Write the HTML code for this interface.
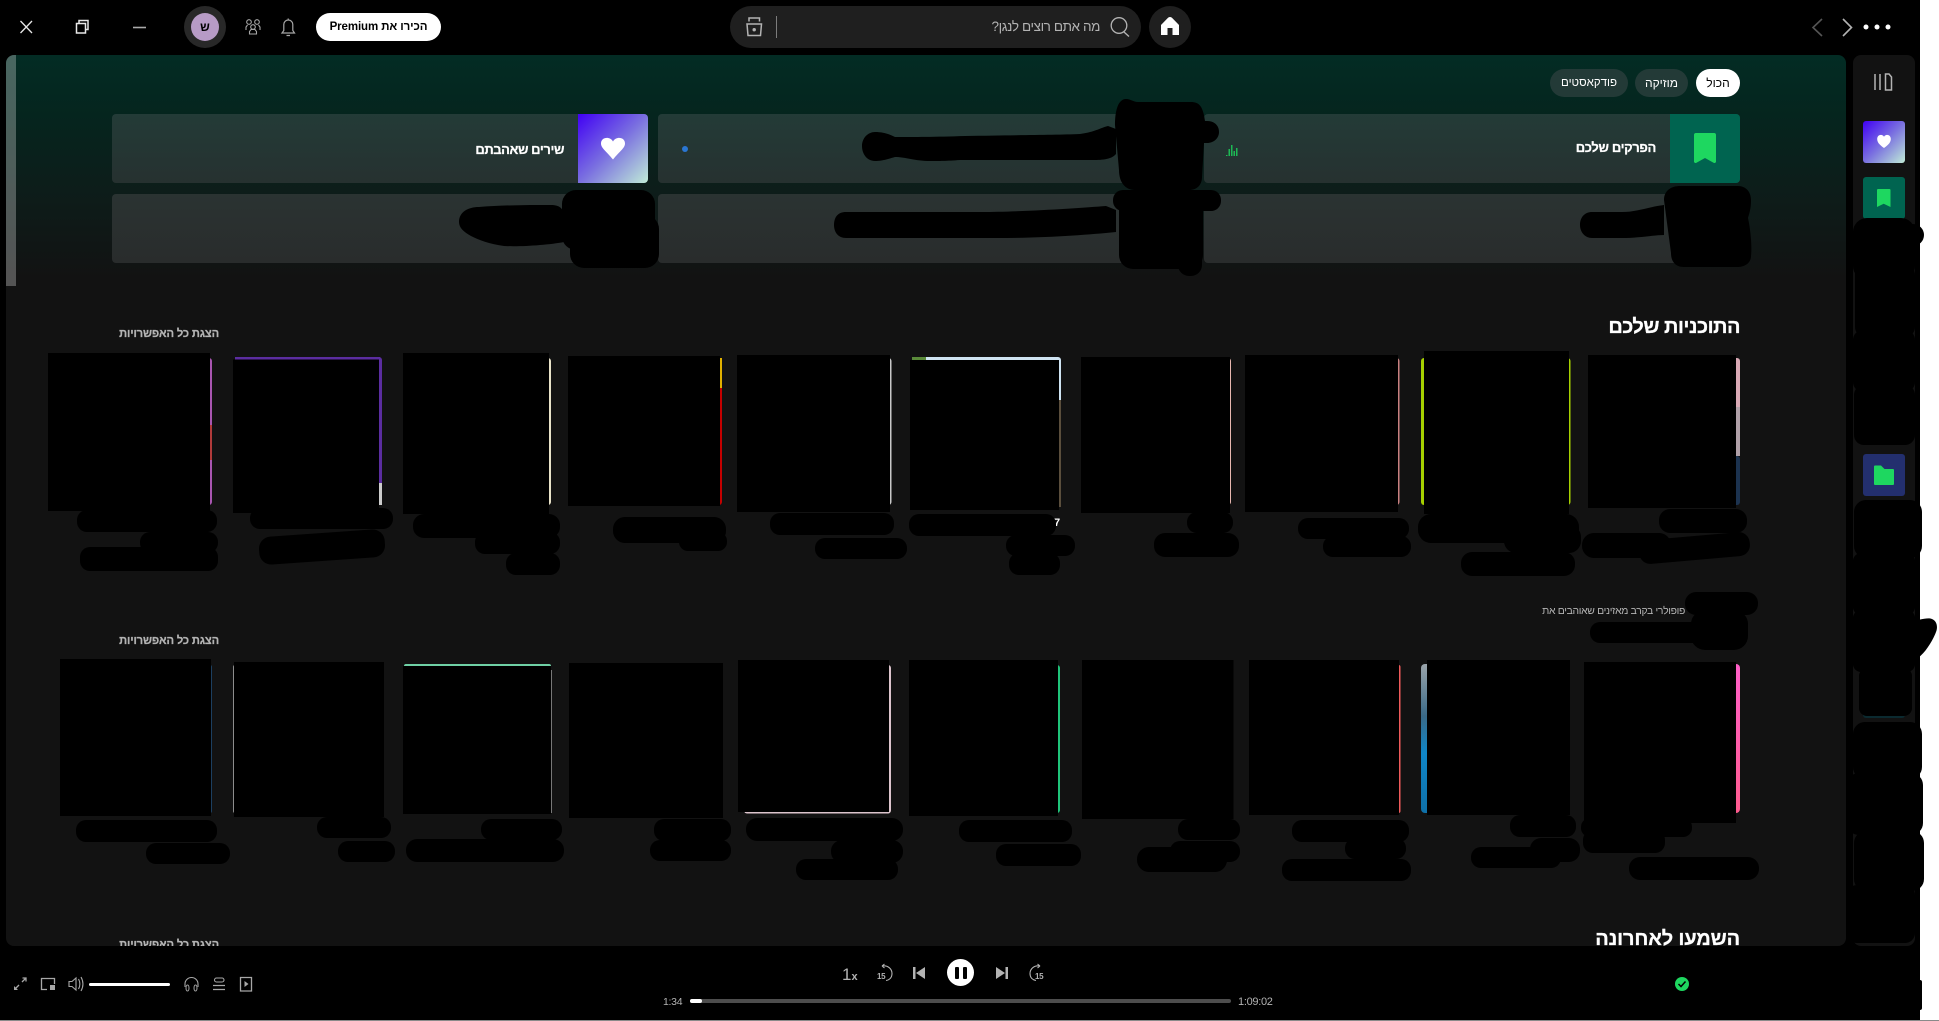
<!DOCTYPE html>
<html lang="he">
<head>
<meta charset="utf-8">
<title>Spotify</title>
<style>
html,body{margin:0;padding:0;width:1939px;height:1021px;overflow:hidden;background:#fff;font-family:"Liberation Sans","Noto Sans CJK JP",sans-serif}
*{box-sizing:border-box}
#app{position:absolute;left:0;top:0;width:1920px;height:1020px;background:#000;overflow:hidden}
#line{position:absolute;left:0;top:1020px;width:1939px;height:1px;background:#8a8a8a}
.a{position:absolute}
.t{position:absolute;white-space:nowrap;direction:rtl;text-align:right;line-height:1}
.b{-webkit-text-stroke:.25px currentColor}
#panel{position:absolute;left:6px;top:55px;width:1840px;height:891px;border-radius:8px;overflow:hidden;background:linear-gradient(#032c24 0,#05251e 60px,#0d1d1a 135px,#121212 225px,#121212 100%)}
#side{position:absolute;left:1853px;top:55px;width:62px;height:891px;border-radius:8px;background:#121212}
.card{position:absolute;width:536px;height:69px;border-radius:4px;overflow:hidden}
.r1{top:59px;background:linear-gradient(#233b37,#263130)}
.r2{top:139px;background:linear-gradient(#2a3332,#292c2c)}
.tile{position:absolute;left:1863px;width:42px;height:42px;border-radius:3px;overflow:hidden}
.chip{position:absolute;top:14px;height:28px;border-radius:14px;background:#233a37;color:#fff;font-size:12px;text-align:center;line-height:28px;direction:rtl}
svg{position:absolute;left:0;top:0;overflow:visible}
</style>
</head>
<body>
<div id="app">
  <div id="panel">
    <div class="a" style="left:0;top:0;width:10px;height:231px;background:rgba(255,255,255,.28)"></div>
    <div class="chip" style="left:1690px;width:44px;background:#fff;color:#000">הכול</div>
    <div class="chip" style="left:1629px;width:53px">מוזיקה</div>
    <div class="chip" style="left:1544px;width:78px;font-size:11.5px">פודקאסטים</div>

    <div class="card r1" style="left:106px">
      <div class="a" style="left:466px;top:0;width:70px;height:69px;background:linear-gradient(135deg,#4000f4,#7a70e0 50%,#c0ecd7)"></div>
      <div class="t b" style="right:84px;top:28.500px;font-size:13px;font-weight:bold;color:#fff;letter-spacing:-.42px">שירים שאהבתם</div>
    </div>
    <div class="card r1" style="left:652px">
      <div class="a" style="left:24px;top:32px;width:6px;height:6px;border-radius:50%;background:#2a76d2"></div>
    </div>
    <div class="card r1" style="left:1198px">
      <div class="a" style="left:466px;top:0;width:70px;height:69px;background:#006450"></div>
      <div class="t b" style="right:84px;top:27px;font-size:13px;font-weight:bold;color:#fff;letter-spacing:-.35px">הפרקים שלכם</div>
    </div>
    <div class="card r2" style="left:106px"></div>
    <div class="card r2" style="left:652px"></div>
    <div class="card r2" style="left:1198px"></div>

    <div class="t b" style="right:106px;top:262px;font-size:20px;font-weight:bold;color:#fff;letter-spacing:-.5px">התוכניות שלכם</div>
    <div class="t b" style="left:113px;width:100px;top:273.500px;font-size:11.2px;font-weight:bold;color:#b3b3b3;letter-spacing:-.15px">הצגת כל האפשרויות</div>

    <div class="t" style="right:161px;top:551.500px;font-size:10.4px;color:#b3b3b3;letter-spacing:-.33px">פופולרי בקרב מאזינים שאוהבים את</div>
    <div class="t b" style="left:113px;width:100px;top:580.500px;font-size:11.2px;font-weight:bold;color:#b3b3b3;letter-spacing:-.15px">הצגת כל האפשרויות</div>

    <div class="t b" style="right:106px;top:874px;font-size:20px;font-weight:bold;color:#fff;letter-spacing:-.15px">השמעו לאחרונה</div>
    <div class="t b" style="left:113px;width:100px;top:885px;font-size:11.2px;font-weight:bold;color:#b3b3b3;letter-spacing:-.15px">הצגת כל האפשרויות</div>
  </div>

  <div id="side"></div>
  <div class="tile" style="top:121px;background:linear-gradient(135deg,#4000f4,#7a70e0 50%,#c0ecd7)"></div>
  <div class="tile" style="top:177px;background:#006450"></div>
  <div class="tile" style="top:454px;background:#232f6e"></div>
  <div class="tile" style="top:676px;background:#0b2a30"></div>

  <!-- top bar -->
  <div class="a" style="left:184px;top:6px;width:42px;height:42px;border-radius:50%;background:#282828"></div>
  <div class="a" style="left:191px;top:13px;width:28px;height:28px;border-radius:50%;background:#b79bc6;color:#000;font-size:12px;font-weight:bold;text-align:center;line-height:28px">ש</div>
  <div class="a" style="left:316px;top:13px;width:125px;height:28px;border-radius:14px;background:#fff;color:#000;font-size:11.5px;font-weight:bold;text-align:center;line-height:28px;direction:rtl;letter-spacing:-.1px">הכירו את Premium</div>
  <div class="a" style="left:730px;top:6px;width:411px;height:42px;border-radius:21px;background:#1f1f1f"></div>
  <div class="a" style="left:776px;top:16px;width:1px;height:22px;background:#7c7c7c"></div>
  <div class="t" style="right:820px;top:20px;font-size:13.500px;color:#b3b3b3;letter-spacing:-.4px">מה אתם רוצים לנגן?</div>
  <div class="a" style="left:1149px;top:6px;width:42px;height:42px;border-radius:50%;background:#1f1f1f"></div>

  <!-- player -->
  <div class="a" style="left:89px;top:983px;width:81px;height:3px;border-radius:2px;background:#fff"></div>
  <div class="t" style="left:663px;top:997px;font-size:10.500px;color:#b3b3b3;direction:ltr;letter-spacing:-.3px">1:34</div>
  <div class="a" style="left:690px;top:999px;width:541px;height:4px;border-radius:2px;background:#4d4d4d"></div>
  <div class="a" style="left:690px;top:999px;width:12px;height:4px;border-radius:2px;background:#fff"></div>
  <div class="t" style="left:1238px;top:997px;font-size:11px;color:#b3b3b3;direction:ltr;letter-spacing:-.3px">1:09:02</div>
  <div class="t" style="left:842px;top:966px;font-size:17px;color:#b3b3b3;direction:ltr">1<span style="font-size:11px;font-weight:bold">x</span></div>
  <div class="a" style="left:947px;top:959px;width:27px;height:27px;border-radius:50%;background:#fff"></div>
  <div class="a" style="left:954.500px;top:966.500px;width:4px;height:12px;background:#000;border-radius:1px"></div>
  <div class="a" style="left:962.500px;top:966.500px;width:4px;height:12px;background:#000;border-radius:1px"></div>
  <div class="t" style="left:877px;top:973px;font-size:8px;font-weight:bold;color:#b3b3b3;direction:ltr;letter-spacing:-.3px">15</div>
  <div class="t" style="left:1035px;top:973px;font-size:8px;font-weight:bold;color:#b3b3b3;direction:ltr;letter-spacing:-.3px">15</div>
  <div class="t" style="left:1054px;top:518px;font-size:11px;font-weight:bold;color:#fff;direction:ltr">7</div>
</div>
<div id="line"></div>

<svg width="1939" height="1021" viewBox="0 0 1939 1021" fill="none">
  <!-- window controls -->
  <g stroke="#e8e8e8" stroke-width="1.300">
    <path d="M20.500 21 32 33M32 21 20.500 33"/>
    <path d="M76.500 23.500h9v9.500h-9zM79 23v-2.500h9v9h-2.500" stroke-width="1.500"/>
    <path d="M133 27.500h13" stroke="#aaa" stroke-width="1.600"/>
  </g>
  <!-- friends -->
  <g stroke="#a7a7a7" stroke-width="1.100">
    <circle cx="249" cy="22" r="2.300"/><circle cx="257" cy="22" r="2.300"/><circle cx="253" cy="27" r="2.300"/>
    <path d="M246 30v-3l1.500-2M260 30v-3l-1.500-2M249.500 34v-2.500l1.500-2h4l1.500 2V34z"/>
  </g>
  <!-- bell -->
  <path d="M282 33h12.500l-1.700-2.500V24.500a4.500 4.500 0 0 0-9 0v6zM286.500 35.500h3.500M288.200 20v-1.500" stroke="#a7a7a7" stroke-width="1.200"/>
  <!-- browse -->
  <g stroke="#b3b3b3" stroke-width="1.500">
    <path d="M747 24h14.500l-1 11.500H748zM749 21.500v-3.500h10.500v3.500"/>
    <circle cx="754.200" cy="29.700" r="1.700" fill="#b3b3b3" stroke="none"/>
  </g>
  <!-- magnifier -->
  <circle cx="1119" cy="25.500" r="7.800" stroke="#b3b3b3" stroke-width="1.300"/>
  <path d="M1124 32l5 4.500" stroke="#b3b3b3" stroke-width="1.400"/>
  <!-- home -->
  <path d="M1170 17c1 0 1.500.4 2.200 1l6.800 7v10h-6.500v-7h-5v7H1161V25l6.800-7c.7-.6 1.200-1 2.200-1z" fill="#fff"/>
  <!-- nav -->
  <path d="M1822 19l-9 8.500 9 8.500" stroke="#555" stroke-width="1.600"/>
  <path d="M1843 19l8.500 8.500-8.500 8.500" stroke="#b3b3b3" stroke-width="1.600"/>
  <circle cx="1866" cy="27" r="2.500" fill="#fff"/><circle cx="1877" cy="27" r="2.500" fill="#fff"/><circle cx="1888" cy="27" r="2.500" fill="#fff"/>
  <!-- card icons -->
  <path d="M613 159.500C606 151 601 148 601 143.500C601 137 610 136 613 141.500C616 136 625 137 625 143.500C625 148 620 151 613 159.500z" fill="#fff"/>
  <path d="M1694 135a2 2 0 0 1 2-2h18a2 2 0 0 1 2 2v27l-1 1h-1l-9-5-9 5h-1l-1-1z" fill="#1ed760"/>
  <path d="M1226 155h1.500v1h-1.500zM1228.500 149h1.500v7h-1.500zM1231 145h1.500v11h-1.500zM1233.500 151h1.500v5h-1.500zM1236 148h1.500v8h-1.500z" fill="#1db954"/>
  <!-- library -->
  <path d="M1875 74v16M1880 74v16M1885.500 74h3.500l2.500 3v13h-6z" stroke="#b3b3b3" stroke-width="1.500"/>
  <!-- side tiles icons -->
  <path d="M1884 148c-5-3.500-6.800-6-6.800-9 0-4.500 5-5.500 6.800-2.300 1.800-3.200 6.800-2.200 6.800 2.300 0 3-1.800 5.500-6.800 9z" fill="#fff"/>
  <path d="M1877 190a1 1 0 0 1 1-1h11.500a1 1 0 0 1 1 1v17l-6.800-3.300-6.700 3.300z" fill="#1ed760"/>
  <path d="M1874 466.500a1 1 0 0 1 1-1h6l3.500 3.500h8.500a1 1 0 0 1 1 1V484a1 1 0 0 1-1 1h-18a1 1 0 0 1-1-1z" fill="#1ed760"/>
  <!-- player left icons -->
  <g stroke="#a7a7a7" stroke-width="1.300">
    <path d="M15 989l4-4M22 982l4-4M22.500 978H26v3.500"/>
    <path d="M14 990v-4l4 4z" fill="#a7a7a7" stroke="none"/>
    <path d="M47 989.500h-5.500v-11h13v5.500"/>
    <path d="M50 985h5v5h-5z" fill="#a7a7a7" stroke="none"/>
    <path d="M69 981.500h3l4-3.500v12l-4-3.500h-3zM78.500 979c1.800 3 1.800 7 0 10M81 977c2.500 4.500 2.500 9.500 0 14" stroke-width="1.100"/>
    <path d="M185 987v-3a6.500 6.500 0 0 1 13 0v3" stroke-width="1.100"/>
    <ellipse cx="187.500" cy="988" rx="1.500" ry="3" stroke-width="1"/>
    <ellipse cx="195.500" cy="988" rx="1.500" ry="3" stroke-width="1"/>
    <rect x="214.500" y="978" width="9.500" height="4" rx="2" stroke-width="1.100"/>
    <path d="M213 985.500h12M213 989.500h12" stroke-width="1.200"/>
    <path d="M240.500 977.500h11v13.500h-11z"/>
    <path d="M244.500 981l4 3-4 3z" fill="#a7a7a7" stroke="none"/>
  </g>
  <!-- transport -->
  <path d="M913 967h2.500v12H913zM925 967v12l-9-6z" fill="#b3b3b3"/>
  <path d="M1008 967h-2.500v12h2.500zM996 967v12l9-6z" fill="#b3b3b3"/>
  <path d="M882 966c6-1 10 3 10 7.500s-3 6.500-6 7M882 966l2.500-2M882 966l2.500 2" stroke="#b3b3b3" stroke-width="1.100"/>
  <path d="M1040 966c-6-1-10 3-10 7.500s3 6.500 6 7M1040 966l-2.500-2M1040 966l-2.500 2" stroke="#b3b3b3" stroke-width="1.100"/>
  <!-- connect check -->
  <circle cx="1682" cy="984" r="7" fill="#1ed760"/>
  <path d="M1678.500 984l2.500 2.500 4.500-5" stroke="#000" stroke-width="1.500"/>

  <!-- strips row 1 -->
  <rect x="200" y="358" width="12" height="147" rx="3" fill="#a855b0"/>
  <rect x="209" y="425" width="3" height="35" fill="#b03a3a"/>
  <rect x="370" y="357" width="12" height="148" rx="3" fill="#5b2da0"/>
  <rect x="379" y="483" width="3" height="22" fill="#ccc"/>
  <rect x="235" y="357" width="145" height="2.500" fill="#5b2da0"/>
  <rect x="540" y="358" width="11" height="147" rx="3" fill="#e8e2c8"/>
  <rect x="710" y="358" width="12" height="147" rx="3" fill="#c40000"/>
  <rect x="720" y="358" width="2" height="30" fill="#e0b000"/>
  <rect x="880" y="358" width="11.500" height="147" rx="3" fill="#c8c8c8"/>
  <rect x="912" y="357" width="149" height="150" rx="3" fill="#cfe4f2"/>
  <rect x="912" y="357" width="14" height="3" fill="#5a8a3a"/>
  <rect x="1059" y="400" width="2" height="107" fill="#5a4e3c"/>
  <rect x="1220" y="358" width="11" height="147" rx="3" fill="#e8b8b0"/>
  <rect x="1390" y="358" width="9.500" height="147" rx="3" fill="#c88080"/>
  <rect x="1421" y="358" width="149.500" height="147" rx="3" fill="#a6d000"/>
  <rect x="1700" y="358" width="40" height="60" rx="3" fill="#d9a9b5"/>
  <rect x="1730" y="407" width="10" height="49" fill="#b0a0a8"/>
  <rect x="1700" y="456" width="40" height="49" rx="3" fill="#1c3350"/>
  <!-- strips row 2 -->
  <rect x="205" y="665" width="7" height="148" rx="2" fill="#1c3f60"/>
  <rect x="233" y="665" width="10" height="148" rx="2" fill="#8c8c8c"/>
  <rect x="404" y="664" width="147" height="20" rx="2" fill="#6fd0a5"/>
  <rect x="551" y="670" width="1" height="143" fill="#777"/>
  <rect x="744" y="665" width="147" height="148.500" rx="3" fill="#dcc4cc"/>
  <rect x="1050" y="665" width="10" height="148" rx="3" fill="#1fc47a"/>
  <rect x="1390" y="665" width="10.500" height="148" rx="2" fill="#f05a5a"/>
  <defs>
    <linearGradient id="bl" x1="0" y1="0" x2="0" y2="1"><stop offset="0" stop-color="#9aa4aa"/><stop offset=".35" stop-color="#3a6a88"/><stop offset=".6" stop-color="#0f86c8"/><stop offset="1" stop-color="#0f70a8"/></linearGradient>
    <linearGradient id="pk" x1="0" y1="0" x2="0" y2="1"><stop offset="0" stop-color="#ff5fc8"/><stop offset="1" stop-color="#ff5b8e"/></linearGradient>
  </defs>
  <rect x="1421" y="664" width="14" height="149" rx="4" fill="url(#bl)"/>
  <rect x="1725" y="664" width="15" height="149" rx="4" fill="url(#pk)"/>

  <g fill="#000">
    <!-- covers row 1 -->
    <rect x="48" y="353" width="162" height="158"/>
    <rect x="233" y="359.500" width="146" height="153.500"/>
    <rect x="403" y="353" width="146" height="161"/>
    <rect x="568" y="356" width="152" height="150"/>
    <rect x="737" y="355" width="153" height="157"/>
    <rect x="910" y="360" width="149" height="150"/>
    <rect x="1081" y="357" width="149" height="156"/>
    <rect x="1245" y="355" width="153" height="157"/>
    <rect x="1424" y="351" width="145" height="163"/>
    <rect x="1588" y="355" width="148" height="153"/>
    <!-- covers row 2 -->
    <rect x="60" y="659" width="151" height="157"/>
    <rect x="234" y="662" width="150" height="155"/>
    <rect x="403" y="666" width="148" height="148"/>
    <rect x="569" y="663" width="154" height="155"/>
    <rect x="738" y="660" width="151" height="152"/>
    <rect x="909" y="660" width="149" height="156"/>
    <rect x="1082" y="660" width="151.500" height="159"/>
    <rect x="1249" y="660" width="150" height="155"/>
    <rect x="1427" y="660" width="143" height="155"/>
    <rect x="1584" y="662" width="152" height="161"/>

    <!-- text scribbles row 1 -->
    <g>
      <rect x="77" y="510" width="140" height="22" rx="10"/><rect x="140" y="532" width="78" height="21" rx="10"/><rect x="80" y="547" width="138" height="24" rx="10"/>
      <rect x="250" y="508" width="143" height="21" rx="10"/><rect x="259" y="533" width="126" height="28" rx="12" transform="rotate(-4 322 547)"/>
      <rect x="413" y="514" width="147" height="24" rx="11"/><rect x="475" y="532" width="85" height="22" rx="10"/><rect x="506" y="553" width="54" height="22" rx="10"/>
      <rect x="613" y="517" width="113" height="26" rx="12"/><rect x="679" y="532" width="48" height="19" rx="9"/>
      <rect x="770" y="513" width="124" height="22" rx="10"/><rect x="815" y="538" width="92" height="21" rx="10"/>
      <rect x="909" y="514" width="147" height="22" rx="10"/><rect x="1006" y="535" width="69" height="21" rx="10"/><rect x="1009" y="553" width="51" height="22" rx="10"/>
      <rect x="1187" y="512" width="46" height="21" rx="10"/><rect x="1154" y="533" width="85" height="24" rx="11"/>
      <rect x="1298" y="518" width="111" height="21" rx="10"/><rect x="1323" y="536" width="88" height="21" rx="10"/>
      <rect x="1418" y="514" width="161" height="29" rx="13"/><rect x="1504" y="525" width="77" height="28" rx="12"/><rect x="1461" y="552" width="114" height="24" rx="11"/>
      <rect x="1659" y="509" width="88" height="24" rx="11"/><rect x="1582" y="533" width="89" height="25" rx="12"/><rect x="1639" y="536" width="111" height="24" rx="11" transform="rotate(-5 1695 548)"/>
    </g>
    <!-- subtitle blobs -->
    <rect x="1685" y="592" width="73" height="23" rx="11"/>
    <rect x="1590" y="622" width="158" height="21" rx="10"/>
    <rect x="1691" y="610" width="57" height="40" rx="14"/>
    <!-- text scribbles row 2 -->
    <g>
      <rect x="76" y="820" width="141" height="22" rx="10"/><rect x="146" y="843" width="84" height="21" rx="10"/>
      <rect x="317" y="817" width="74" height="21" rx="10"/><rect x="338" y="841" width="57" height="21" rx="10"/>
      <rect x="481" y="819" width="81" height="21" rx="10"/><rect x="406" y="839" width="158" height="23" rx="11"/>
      <rect x="654" y="819" width="77" height="22" rx="10"/><rect x="650" y="840" width="81" height="21" rx="10"/>
      <rect x="746" y="818" width="157" height="23" rx="11"/><rect x="831" y="840" width="72" height="23" rx="11"/><rect x="796" y="859" width="102" height="21" rx="10"/>
      <rect x="959" y="820" width="113" height="22" rx="10"/><rect x="996" y="844" width="85" height="22" rx="10"/>
      <rect x="1178" y="819" width="62" height="21" rx="10"/><rect x="1137" y="847" width="90" height="25" rx="12"/><rect x="1170" y="841" width="70" height="21" rx="10"/>
      <rect x="1292" y="820" width="117" height="22" rx="10"/><rect x="1345" y="838" width="61" height="21" rx="10"/><rect x="1282" y="859" width="129" height="22" rx="10"/>
      <rect x="1510" y="815" width="66" height="22" rx="10"/><rect x="1471" y="847" width="90" height="21" rx="10"/><rect x="1530" y="838" width="50" height="24" rx="11"/>
      <rect x="1581" y="818" width="111" height="19" rx="9"/><rect x="1583" y="830" width="82" height="23" rx="10"/><rect x="1629" y="857" width="130" height="23" rx="11"/>
    </g>

    <!-- top cards blobs -->
    <path d="M1115 125c0-14 3-26 11-26 5 0 7 3 12 3h53c8 0 12 4 14 19h2c8 0 12 5 12 11s-5 11-12 11h-3l-2 34c0 8-5 13-13 13h-54c-10 0-16-8-16-20z"/>
    <path d="M862 146c0-8 6-14 13-14 8 0 14 2 20 5 20 0 40 0 70-1 50-1 90-1 115-2 15-2 20-6 28-8l8 3v25c-5 6-15 6-25 6H960c-14 1-20 1-30 1-15 0-25-4-35-4-10 3-15 4-20 4-8 0-13-7-13-15z"/>
    <rect x="1113" y="190" width="108" height="21" rx="10"/>
    <rect x="1119" y="190" width="84" height="79" rx="14"/>
    <rect x="1178" y="240" width="24" height="36" rx="11"/>
    <path d="M834 225c0-8 4-13 12-13h135c40 0 100-4 125-6l10 4v22c-30 3-70 6-120 6H846c-8 0-12-6-12-13z"/>
    <path d="M1664 200c0-10 8-14 16-14h58c8 0 13 6 13 14 0 10-2 14-3 18 3 14 4 30 3 38 0 7-6 11-14 11h-53c-9 0-13-6-13-14z"/>
    <path d="M1580 225c0-8 5-13 12-13h30c15 0 26-5 42-7v30c-10 0-25 3-42 3h-30c-7 0-12-6-12-13z"/>
    <rect x="562" y="190" width="93" height="60" rx="14"/>
    <rect x="570" y="215" width="89" height="53" rx="14"/>
    <path d="M459 222c0-10 9-15 20-15 25-2 50-2 72-2 8 0 13 3 13 12v25c-15 3-45 5-60 4-15-2-25-6-33-10-7-4-12-8-12-14z"/>

    <!-- sidebar blobs -->
    <rect x="1853" y="218" width="62" height="62" rx="14"/>
    <rect x="1900" y="224" width="24" height="22" rx="11"/>
    <rect x="1855" y="265" width="60" height="72" rx="10"/>
    <rect x="1853" y="330" width="62" height="62" rx="10"/>
    <rect x="1854" y="385" width="61" height="60" rx="10"/>
    <rect x="1854" y="500" width="68" height="58" rx="12"/>
    <rect x="1853" y="553" width="62" height="62" rx="8"/>
    <rect x="1853" y="610" width="62" height="62" rx="8"/>
    <path d="M1910 622c8-2 18-5 22-3 5 2 6 8 4 13-3 8-10 20-18 26l-10 2z"/>
    <rect x="1859" y="668" width="53" height="48" rx="8"/>
    <rect x="1853" y="722" width="69" height="57" rx="12"/>
    <rect x="1847" y="773" width="76" height="62" rx="12"/>
    <rect x="1854" y="831" width="70" height="60" rx="12"/>
    <rect x="1847" y="885" width="68" height="58" rx="10"/>
    <rect x="1918" y="980" width="4" height="30" rx="2"/>
  </g>
</svg>
</body>
</html>
